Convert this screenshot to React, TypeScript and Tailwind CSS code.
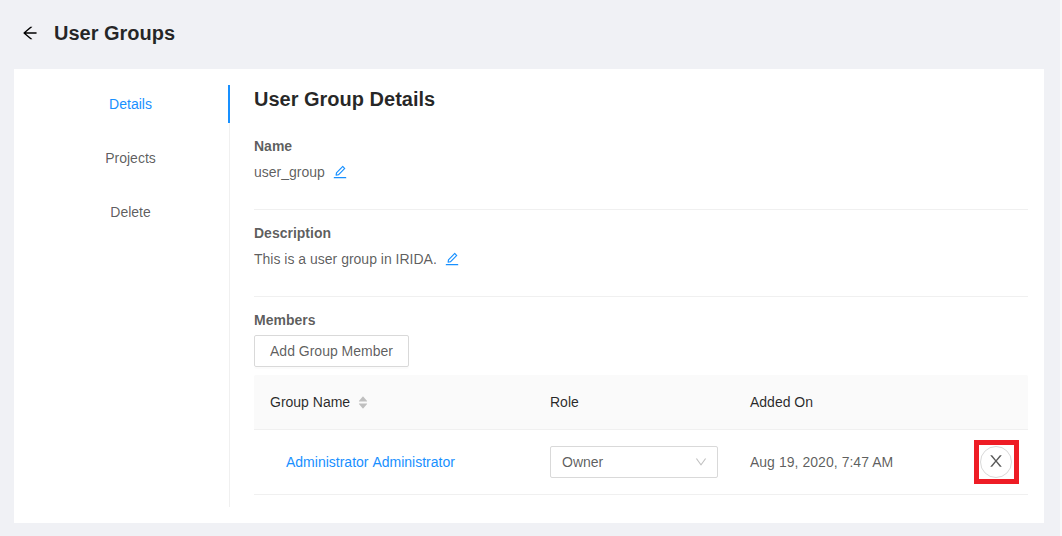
import React from "react";
import {
  AiOutlineArrowLeft,
  AiOutlineEdit,
  AiOutlineDown,
  AiFillCaretUp,
  AiFillCaretDown,
} from "react-icons/ai";

const TIGHT_VIEW_BOX = "64 64 896 896";

function CloseIcon() {
  return (
    <svg viewBox={TIGHT_VIEW_BOX} width={16} height={16} fill="currentColor">
      <path d="M563.8 512l262.5-312.9c4.4-5.2.7-13.1-6.1-13.1h-79.8c-4.7 0-9.2 2.1-12.3 5.7L511.6 449.8 295.1 191.7c-3-3.6-7.5-5.7-12.3-5.7H203c-6.8 0-10.5 7.9-6.1 13.1L459.4 512 196.9 824.9A7.95 7.95 0 0 0 203 838h79.8c4.7 0 9.2-2.1 12.3-5.7l216.5-258.1 216.5 258.1c3 3.6 7.5 5.7 12.3 5.7h79.8c6.8 0 10.5-7.9 6.1-13.1L563.8 512z" />
    </svg>
  );
}

function Field({ label, value }: { label: string; value: string }) {
  return (
    <section className="mb-3 h-[75px] border-b border-[#f0f0f0]">
      <h3 className="font-semibold">{label}</h3>
      <div className="mt-1">
        {value}
        <button aria-label={`Edit ${label}`} className="ml-2 text-[#1890ff]">
          <AiOutlineEdit
            size={14}
            viewBox={TIGHT_VIEW_BOX}
            className="inline-block align-[-0.125em]"
          />
        </button>
      </div>
    </section>
  );
}

function MenuItem({ label, active = false }: { label: string; active?: boolean }) {
  return (
    <li
      className={
        active
          ? "-mr-px flex h-[38px] items-center justify-center border-r-2 border-[#1890ff] pl-[3px] text-[#1890ff]"
          : "-mr-px flex h-[38px] items-center justify-center pl-px"
      }
    >
      {label}
    </li>
  );
}

function MembersTable() {
  return (
    <div className="mt-2">
      <div className="grid h-[55px] grid-cols-[280px_200px_1fr] items-center rounded-t-xs border-b border-[#f0f0f0] bg-[#fafafa] font-medium text-black/85">
        <div className="flex items-center pl-4">
          Group Name
          <span className="mt-px ml-[7px] flex flex-col text-[#bfbfbf]">
            <AiFillCaretUp size={12} />
            <AiFillCaretDown size={12} className="-mt-[5px]" />
          </span>
        </div>
        <div className="pl-4">Role</div>
        <div className="pl-4">Added On</div>
      </div>
      <div className="grid h-[65px] grid-cols-[280px_200px_1fr_54px] items-center border-b border-[#f0f0f0]">
        <a className="pl-8 text-[#1890ff] [word-spacing:0.8px]">Administrator Administrator</a>
        <div className="pl-4">
          <div className="flex h-8 w-[168px] items-center justify-between rounded-xs border border-[#d9d9d9] pr-[10px] pl-[11px]">
            Owner
            <AiOutlineDown size={12} viewBox={TIGHT_VIEW_BOX} className="text-black/25" />
          </div>
        </div>
        <div className="pl-4 [word-spacing:0.2px]">Aug 19, 2020, 7:47 AM</div>
        <div className="flex h-11 w-[45px] items-center border-[5px] border-[#ee1c25] pl-px">
          <button
            aria-label="Remove member"
            className="flex size-8 shrink-0 items-center justify-center rounded-full border border-[#d9d9d9] pb-0.5"
          >
            <CloseIcon />
          </button>
        </div>
      </div>
    </div>
  );
}

export default function App() {
  return (
    <div className="h-[536px] w-[1062px] bg-[#f8f8fa] font-['Liberation_Sans',Arial,sans-serif] text-sm leading-[22px] text-black/65">
      <div className="h-full w-[1060px] bg-[#f0f1f5] pr-4 pl-3.5">
        <header className="flex h-[69px] items-center pb-[3px] pl-2 text-black/85">
          <AiOutlineArrowLeft size={16} viewBox={TIGHT_VIEW_BOX} className="mr-4 text-black" />
          <h1 className="text-xl font-semibold">User Groups</h1>
        </header>
        <main className="flex h-[454px] bg-white p-4">
          <ul className="flex w-[200px] flex-col gap-4 border-r border-[#f0f0f0]">
            <MenuItem label="Details" active />
            <MenuItem label="Projects" />
            <MenuItem label="Delete" />
          </ul>
          <div className="ml-6 flex-1">
            <h2 className="mb-[22px] text-xl leading-7 font-semibold text-black/85">
              User Group Details
            </h2>
            <Field label="Name" value="user_group" />
            <Field label="Description" value="This is a user group in IRIDA." />
            <h3 className="font-semibold">Members</h3>
            <button className="mt-1 block h-8 w-[155px] rounded-xs border border-[#d9d9d9] shadow-[0_2px_0_rgba(0,0,0,0.015)]">
              Add Group Member
            </button>
            <MembersTable />
          </div>
        </main>
      </div>
    </div>
  );
}
